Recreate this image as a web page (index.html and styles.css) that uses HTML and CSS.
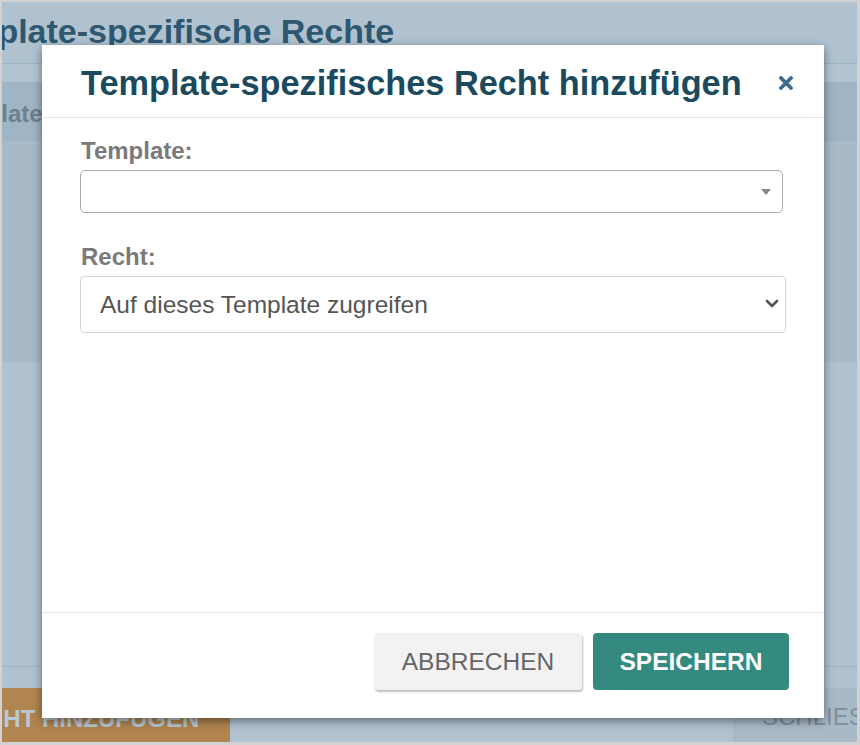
FILE: index.html
```html
<!doctype html>
<html lang="de">
    <head>
        <meta charset="UTF-8">
        <meta name="viewport" content="width=device-width, initial-scale=1.0">
        <title>Template-spezifische Rechte</title>
        <link rel="stylesheet" href="styles.css">
    </head>
    <body>
        <div class="screen">
            <div class="page">
                <h1 class="page-title">Template-spezifische Rechte</h1>
                <div class="page-toolbar"></div>
                <table class="rights-table">
                    <thead>
                        <tr><th>Template</th><th>Recht</th></tr>
                    </thead>
                    <tbody>
                        <tr><td colspan="2"></td></tr>
                    </tbody>
                </table>
                <div class="page-spacer"></div>
                <div class="page-footer">
                    <button class="btn-add" type="button">Recht hinzufügen</button>
                    <button class="btn-close" type="button">Schließen</button>
                </div>
            </div>

            <div class="modal">
                <div class="modal-header">
                    <h4 class="modal-title">Template-spezifisches Recht hinzufügen</h4>
                    <button class="modal-close" type="button" aria-label="Schließen">
                        <svg width="16" height="14" viewBox="0 0 16 14">
                            <path d="M3 2 L13 12 M13 2 L3 12" stroke="#3e6a8c" stroke-width="3.8" stroke-linecap="round"/>
                        </svg>
                    </button>
                </div>
                <form class="modal-body">
                    <div class="form-field">
                        <label class="form-label">Template:</label>
                        <span class="select2-box">
                            <span class="select2-value"></span>
                            <span class="select2-arrow"></span>
                        </span>
                    </div>
                    <div class="form-field">
                        <label class="form-label" for="right">Recht:</label>
                        <div class="select-wrap">
                            <select id="right" class="form-select">
                                <option>Auf dieses Template zugreifen</option>
                                <option>Template bearbeiten</option>
                                <option>Template löschen</option>
                            </select>
                            <svg class="select-chevron" width="14" height="9" viewBox="0 0 14 9">
                                <path d="M2 2 L7 7 L12 2" fill="none" stroke="#555" stroke-width="2.6" stroke-linecap="round" stroke-linejoin="round"/>
                            </svg>
                        </div>
                    </div>
                </form>
                <div class="modal-footer">
                    <button class="btn btn-cancel" type="button">Abbrechen</button>
                    <button class="btn btn-save" type="button">Speichern</button>
                </div>
            </div>
        </div>
    </body>
</html>
```

FILE: styles.css
```css
* {
    box-sizing: border-box;
}

body {
    margin: 0;
    font-family: "Liberation Sans", Arial, sans-serif;
}

.screen {
    position: relative;
    width: 860px;
    height: 745px;
    overflow: hidden;
    border: solid #d2d2d2;
    border-width: 2px 3px 3px 2px;
    background: #b0c2d0;
}

/* page behind the dialog, already dimmed */
.page {
    width: 1020px;
    margin-left: -72px;
}

.page-title {
    margin: 0;
    height: 62px;
    padding-top: 10px;
    font-size: 34px;
    line-height: 38px;
    font-weight: bold;
    color: #2e5870;
    border-bottom: 1px solid #a0b3c1;
}

.page-toolbar {
    height: 18px;
    background: #b3c4d1;
}

.rights-table {
    width: 100%;
    border-collapse: collapse;
}

.rights-table th {
    height: 59px;
    padding: 4px 0 0 9px;
    text-align: left;
    font-size: 24px;
    color: #6f808d;
    background: #9fb4c5;
}

.rights-table td {
    height: 221px;
    background: #a8bac8;
}

.page-spacer {
    height: 304px;
}

.page-footer {
    display: flex;
    justify-content: space-between;
    padding-top: 21px;
    border-top: 1px solid #a2b4c2;
}

.page-footer button {
    height: 57px;
    border: 0;
    font-family: inherit;
    font-size: 24px;
    text-transform: uppercase;
}

.btn-add {
    width: 300px;
    padding: 4px 8px 0 0;
    font-weight: bold;
    color: #b9c9d6;
    background: #b08550;
}

.btn-close {
    width: 217px;
    padding: 0 0 0 29px;
    text-align: left;
    color: #7f8f9c;
    background: #a9bac7;
}

/* dialog */
.modal {
    position: absolute;
    left: 40px;
    top: 43px;
    width: 782px;
    height: 673px;
    display: flex;
    flex-direction: column;
    background: #fff;
    box-shadow: 0 3px 9px rgba(0, 0, 0, .45);
}

.modal-header {
    display: flex;
    align-items: center;
    justify-content: space-between;
    height: 73px;
    padding: 4px 30px 0 39px;
    border-bottom: 1px solid #e6e6e6;
}

.modal-title {
    margin: 0;
    font-size: 34.3px;
    font-weight: bold;
    color: #1b4a5f;
}

.modal-close {
    padding: 0;
    border: 0;
    background: none;
    cursor: pointer;
    line-height: 0;
}

.modal-body {
    flex: 1;
    margin: 0;
    padding: 19px 38px 0;
}

.form-field {
    margin-bottom: 30px;
}

.form-label {
    display: block;
    margin: 0 0 5px 1px;
    font-size: 24px;
    line-height: 28px;
    font-weight: bold;
    color: #7a7a7a;
}

.select2-box {
    display: flex;
    align-items: center;
    width: 703px;
    height: 43px;
    border: 1px solid #aaa;
    border-radius: 5px;
    padding: 0 11px 0 20px;
}

.select2-value {
    flex: 1;
}

.select2-arrow {
    width: 0;
    height: 0;
    border-style: solid;
    border-width: 6px 5px 0;
    border-color: #888 transparent transparent;
}

.select-wrap {
    position: relative;
}

.form-select {
    display: block;
    width: 100%;
    height: 57px;
    padding: 0 40px 0 19px;
    border: 1px solid #d6d6d6;
    border-radius: 4px;
    appearance: none;
    background: #fff;
    font-family: inherit;
    font-size: 24.5px;
    color: #555;
}

.select-chevron {
    position: absolute;
    right: 7px;
    top: 23px;
    pointer-events: none;
}

.modal-footer {
    display: flex;
    justify-content: flex-end;
    gap: 11px;
    height: 106px;
    padding: 20px 35px 0;
    border-top: 1px solid #e6e6e6;
}

.btn {
    height: 57px;
    border: 0;
    border-radius: 4px;
    font-family: inherit;
    font-size: 24.5px;
    text-transform: uppercase;
    cursor: pointer;
}

.btn-cancel {
    width: 208px;
    color: #666;
    background: #f2f2f2;
    box-shadow: 1px 2px 2px rgba(0, 0, 0, .25);
}

.btn-save {
    width: 196px;
    font-weight: bold;
    color: #fff;
    background: #348a7e;
}
```
